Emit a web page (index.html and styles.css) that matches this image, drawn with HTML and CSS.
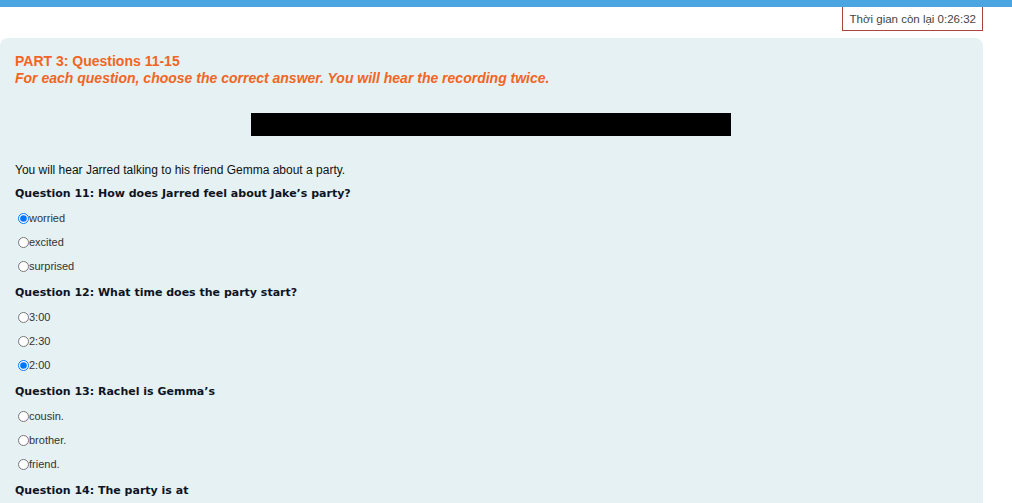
FILE: index.html
```html
<!DOCTYPE html>
<html lang="vi">
<head>
    <meta charset="UTF-8">
    <meta name="viewport" content="width=device-width, initial-scale=1.0">
    <title>PART 3: Questions 11-15</title>
    <link rel="stylesheet" href="styles.css">
</head>
<body>
    <div class="topbar"></div>

    <div class="timer-row">
        <div class="timer">Thời gian còn lại 0:26:32</div>
    </div>

    <div class="panel">
        <div class="part-title">PART 3: Questions 11-15</div>
        <div class="part-instr">For each question, choose the correct answer. You will hear the recording twice.</div>

        <div class="audio"></div>

        <p class="intro">You will hear Jarred talking to his friend Gemma about a party.</p>

        <div class="question">
            <div class="q-title">Question 11: How does Jarred feel about Jake’s party?</div>
            <label class="option"><input type="radio" name="q11" checked>worried</label>
            <label class="option"><input type="radio" name="q11">excited</label>
            <label class="option"><input type="radio" name="q11">surprised</label>
        </div>

        <div class="question">
            <div class="q-title">Question 12: What time does the party start?</div>
            <label class="option"><input type="radio" name="q12">3:00</label>
            <label class="option"><input type="radio" name="q12">2:30</label>
            <label class="option"><input type="radio" name="q12" checked>2:00</label>
        </div>

        <div class="question">
            <div class="q-title">Question 13: Rachel is Gemma’s</div>
            <label class="option"><input type="radio" name="q13">cousin.</label>
            <label class="option"><input type="radio" name="q13">brother.</label>
            <label class="option"><input type="radio" name="q13">friend.</label>
        </div>

        <div class="question">
            <div class="q-title">Question 14: The party is at</div>
            <label class="option"><input type="radio" name="q14">the park.</label>
            <label class="option"><input type="radio" name="q14">Jake’s house.</label>
            <label class="option"><input type="radio" name="q14">a café.</label>
        </div>
    </div>
</body>
</html>
```

FILE: styles.css
```css
body { margin: 0; font-family: "Liberation Sans", Arial, sans-serif; color: #222; background: #fff; }
.topbar { height: 7px; background: #4ba5e1; }
.timer-row { display: flex; justify-content: flex-end; padding-right: 29px; }
.timer { border: 1px solid #a94442; border-top: none; padding: 6px 6px 5px 7px; font-size: 11.5px; line-height: 12px; color: #444; }
.panel { width: 983px; box-sizing: border-box; margin-top: 7px; background: #e6f1f4; border-radius: 8px; padding: 15px 16px 20px 15px; }
.part-title { color: #f26522; font-size: 14px; font-weight: bold; line-height: 16px; }
.part-instr { color: #f26522; font-size: 14px; font-weight: bold; font-style: italic; line-height: 17px; margin-top: 1px; }
.audio { width: 480px; height: 23px; background: #000; margin: 26px auto 0 auto; }
.intro { font-size: 12px; margin: 27px 0 0 0; line-height: 14px; color: #111; }
.q-title { font-family: "DejaVu Sans", Verdana, sans-serif; font-weight: bold; font-size: 11px; color: #0d1424; margin-top: 10px; line-height: 14px; }
.question + .question .q-title { margin-top: 13px; }
.option { display: flex; align-items: center; font-size: 11px; color: #333; margin-top: 10px; line-height: 14px; }
.option input { width: 11px; height: 11px; margin: 0 0 0 3px; }
```
